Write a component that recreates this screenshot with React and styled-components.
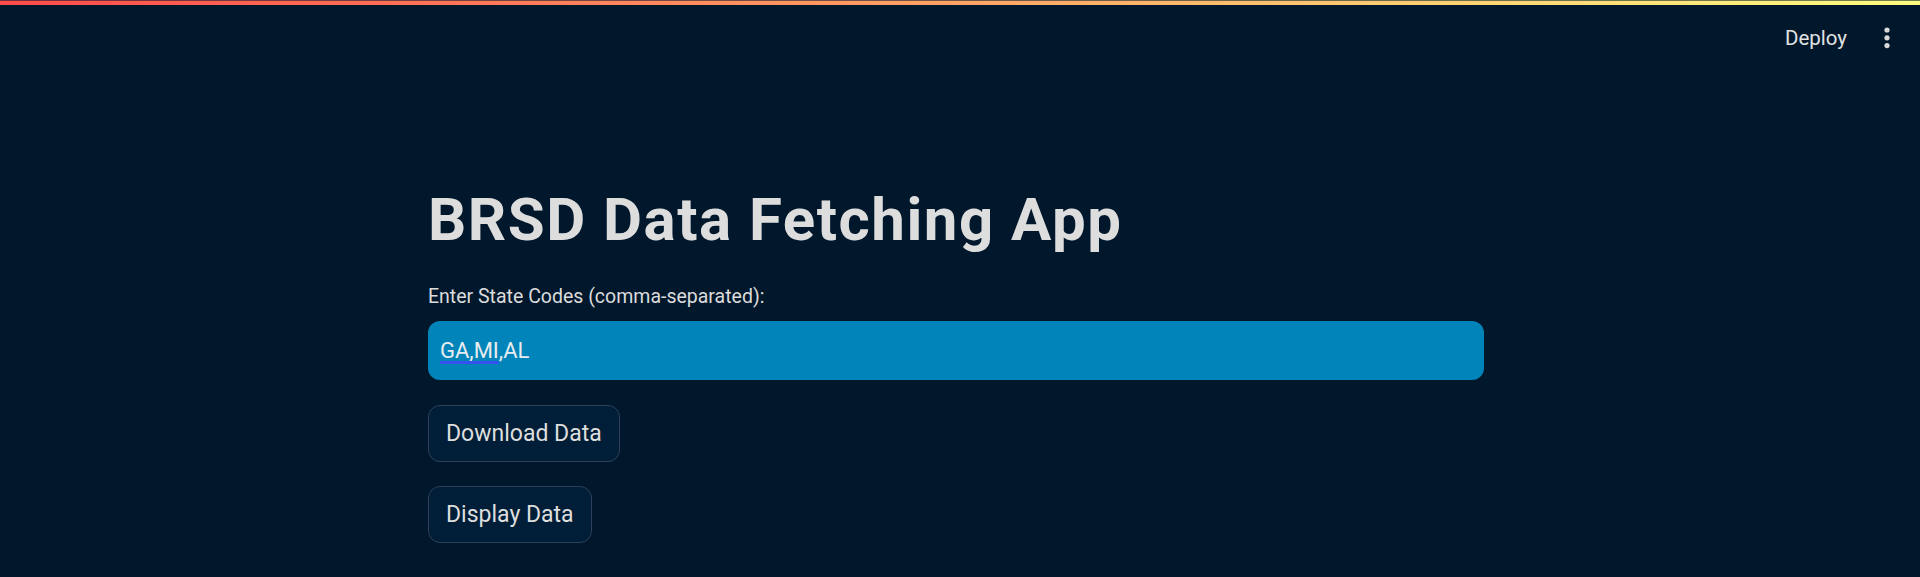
import React from 'react'
import styled, { createGlobalStyle } from 'styled-components'

const GlobalStyle = createGlobalStyle`
  html, body {
    margin: 0;
    padding: 0;
    background: #01182c;
  }
  body {
    font-family: Roboto, "Liberation Sans", sans-serif;
    color: #dedede;
  }
`

export default function App() {
  return (
    <>
      <GlobalStyle />
      <Decoration />
      <Header>
        <DeployButton>Deploy</DeployButton>
        <MenuButton aria-label="Main menu">
          <svg width="6" height="22" viewBox="0 0 6 22">
            <circle cx="3" cy="3" r="2.6" fill="#d9d9d9" />
            <circle cx="3" cy="10.8" r="2.6" fill="#d9d9d9" />
            <circle cx="3" cy="18.6" r="2.6" fill="#d9d9d9" />
          </svg>
        </MenuButton>
      </Header>
      <Main>
        <Block>
          <Title>BRSD Data Fetching App</Title>
          <Label htmlFor="states">Enter State Codes (comma-separated):</Label>
          <InputWrap>
            <Input id="states" defaultValue="GA,MI,AL" spellCheck={false} />
            <SpellMark aria-hidden="true">
              <Squiggle>GA,MI</Squiggle>
            </SpellMark>
          </InputWrap>
          <Button>Download Data</Button>
          <Button>Display Data</Button>
        </Block>
      </Main>
    </>
  )
}

const Decoration = styled.div`
  height: 5px;
  background:
    linear-gradient(to bottom, rgba(1, 24, 44, 0.55) 1px, transparent 1px),
    linear-gradient(90deg, #ff4b4b, #fffd80);
`

const Header = styled.header`
  height: 65px;
  display: flex;
  align-items: center;
  justify-content: flex-end;
  padding-right: 18px;
`

const DeployButton = styled.button`
  background: transparent;
  border: none;
  color: #e2e2e2;
  font-family: Roboto, "Liberation Sans", sans-serif;
  font-size: 20.5px;
  padding: 8px 14px;
  margin-right: 11px;
  cursor: pointer;
`

const MenuButton = styled.button`
  width: 30px;
  height: 36px;
  display: flex;
  align-items: center;
  justify-content: center;
  background: transparent;
  border: none;
  padding: 0;
  cursor: pointer;
`

const Main = styled.main`
  display: flex;
  justify-content: center;
  padding-right: 8px;
`

const Block = styled.section`
  width: 1056px;
  display: flex;
  flex-direction: column;
  align-items: flex-start;
  padding-top: 114px;
`

const Title = styled.h1`
  margin: 0 0 29px;
  font-size: 60px;
  font-weight: 700;
  line-height: 72px;
  letter-spacing: 1.5px;
  color: #dddddd;
`

const Label = styled.label`
  font-size: 19.5px;
  line-height: 24px;
  color: #dcdcdc;
  margin-bottom: 12px;
`

const InputWrap = styled.div`
  position: relative;
  width: 100%;
  margin-bottom: 25px;
`

const Input = styled.input`
  box-sizing: border-box;
  width: 100%;
  height: 59px;
  border: none;
  border-radius: 12px;
  background: #0084ba;
  color: #e9ecee;
  font-family: Roboto, "Liberation Sans", sans-serif;
  font-size: 22px;
  padding: 0 12px;
  outline: none;
`

const SpellMark = styled.div`
  position: absolute;
  inset: 0;
  display: flex;
  align-items: center;
  padding-left: 12px;
  font-size: 22px;
  pointer-events: none;
`

const Squiggle = styled.span`
  color: transparent;
  text-decoration-line: underline;
  text-decoration-style: solid;
  text-decoration-color: #3552ee;
  text-decoration-thickness: 3px;
  text-underline-offset: 3px;
`

const Button = styled.button`
  box-sizing: border-box;
  height: 57px;
  padding: 0 17px;
  margin-bottom: 24px;
  border: 1px solid #2f4159;
  border-radius: 12px;
  background: #001e37;
  color: #dedede;
  font-family: Roboto, "Liberation Sans", sans-serif;
  font-size: 23px;
  cursor: pointer;
`
